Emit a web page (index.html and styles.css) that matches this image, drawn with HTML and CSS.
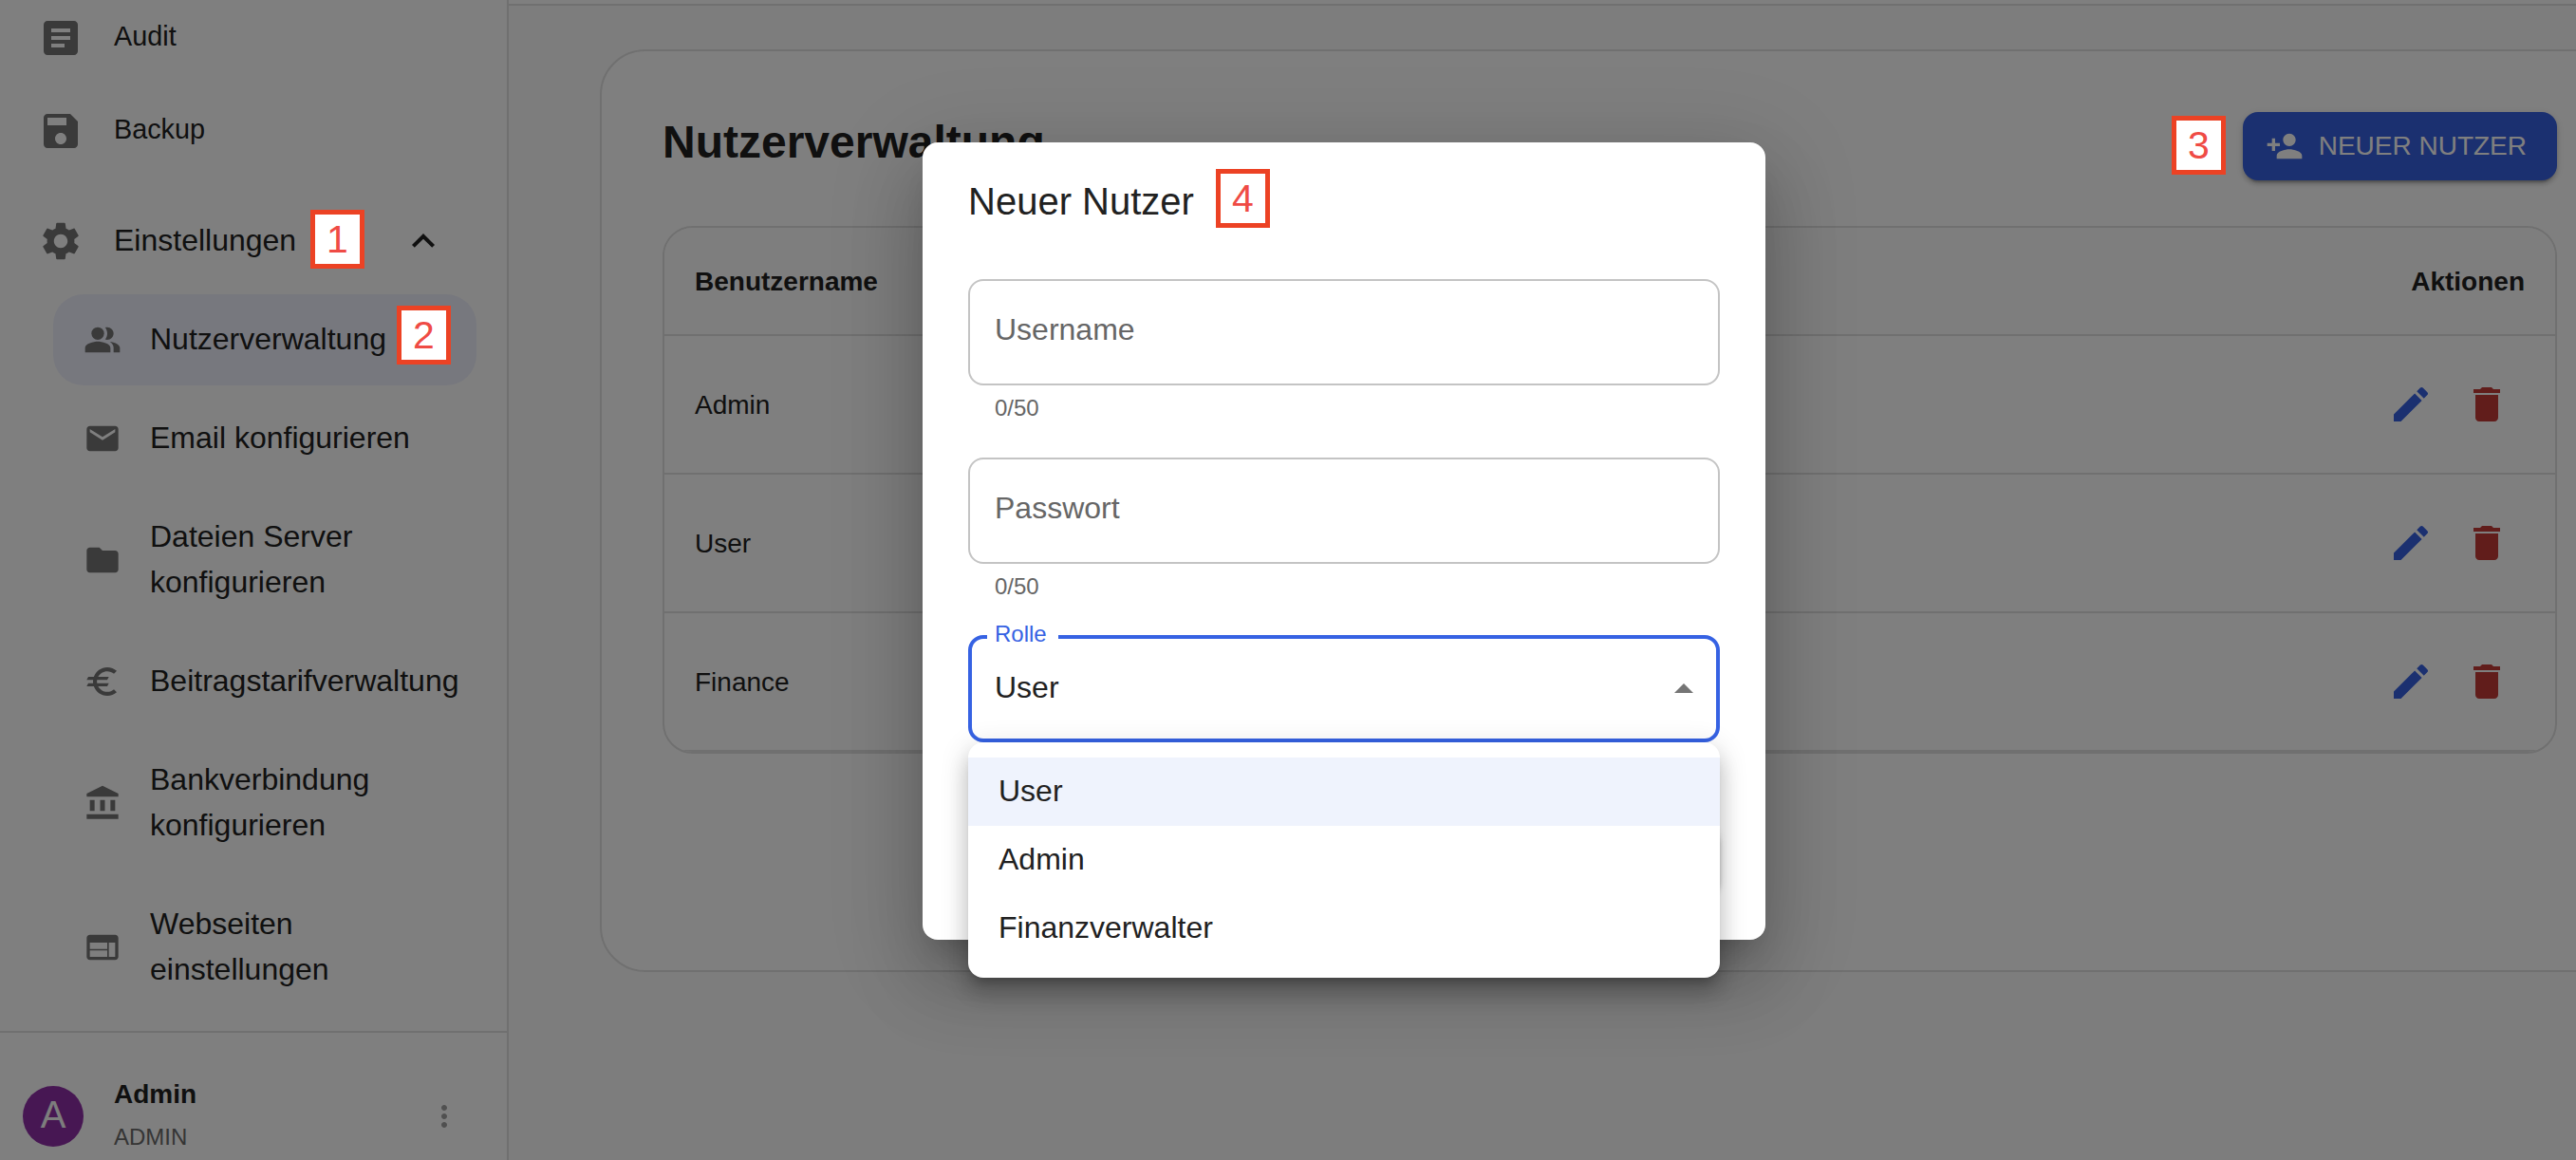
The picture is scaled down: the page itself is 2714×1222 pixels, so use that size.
FILE: index.html
```html
<!DOCTYPE html>
<html lang="de">
<head>
    <meta charset="UTF-8">
    <meta name="viewport" content="width=device-width, initial-scale=1.0">
    <title>Nutzerverwaltung</title>
    <link rel="stylesheet" href="styles.css">
</head>
<body>
    <!-- shared icons -->
    <svg class="sprite">
        <symbol id="icon-edit" viewBox="0 0 24 24"><path d="M3 17.25V21h3.75L17.81 9.94l-3.75-3.75L3 17.25zM20.71 7.04c.39-.39.39-1.02 0-1.41l-2.34-2.34c-.39-.39-1.02-.39-1.41 0l-1.83 1.83 3.75 3.75 1.83-1.83z"/></symbol>
        <symbol id="icon-delete" viewBox="0 0 24 24"><path d="M6 19c0 1.1.9 2 2 2h8c1.1 0 2-.9 2-2V7H6v12zM19 4h-3.5l-1-1h-5l-1 1H5v2h14V4z"/></symbol>
    </svg>

    <div class="app">
        <aside class="sidebar">
            <nav class="nav">
                <a class="nav-item">
                    <svg class="icon" viewBox="0 0 24 24"><path d="M19 3H5c-1.1 0-2 .9-2 2v14c0 1.1.9 2 2 2h14c1.1 0 2-.9 2-2V5c0-1.1-.9-2-2-2zm-5 14H7v-2h7v2zm3-4H7v-2h10v2zm0-4H7V7h10v2z"/></svg>
                    <span>Audit</span>
                </a>
                <a class="nav-item">
                    <svg class="icon" viewBox="0 0 24 24"><path d="M17 3H5c-1.11 0-2 .9-2 2v14c0 1.1.89 2 2 2h14c1.1 0 2-.9 2-2V7l-4-4zm-5 16c-1.66 0-3-1.34-3-3s1.34-3 3-3 3 1.34 3 3-1.34 3-3 3zm3-10H5V5h10v4z"/></svg>
                    <span>Backup</span>
                </a>
                <a class="nav-item nav-group">
                    <svg class="icon" viewBox="0 0 24 24"><path d="M19.14 12.94c.04-.3.06-.61.06-.94 0-.32-.02-.64-.07-.94l2.03-1.58c.18-.14.23-.41.12-.61l-1.92-3.32c-.12-.22-.37-.29-.59-.22l-2.39.96c-.5-.38-1.03-.7-1.62-.94l-.36-2.54c-.04-.24-.24-.41-.48-.41h-3.84c-.24 0-.43.17-.47.41l-.36 2.54c-.59.24-1.13.57-1.62.94l-2.39-.96c-.22-.08-.47 0-.59.22L2.74 8.87c-.12.21-.08.47.12.61l2.03 1.58c-.05.3-.09.63-.09.94s.02.64.07.94l-2.03 1.58c-.18.14-.23.41-.12.61l1.92 3.32c.12.22.37.29.59.22l2.39-.96c.5.38 1.03.7 1.62.94l.36 2.54c.05.24.24.41.48.41h3.84c.24 0 .44-.17.47-.41l.36-2.54c.59-.24 1.13-.56 1.62-.94l2.39.96c.22.08.47 0 .59-.22l1.92-3.32c.12-.22.07-.47-.12-.61l-2.01-1.58zM12 15.6c-1.98 0-3.6-1.62-3.6-3.6s1.62-3.6 3.6-3.6 3.6 1.62 3.6 3.6-1.62 3.6-3.6 3.6z"/></svg>
                    <span>Einstellungen</span>
                    <svg class="icon chevron" viewBox="0 0 24 24"><path d="m12 8-6 6 1.41 1.41L12 10.83l4.59 4.58L18 14z"/></svg>
                </a>
                <div class="sub-nav">
                    <a class="sub-item active">
                        <svg class="icon" viewBox="0 0 24 24"><path d="M16.67 13.13C18.04 14.06 19 15.32 19 17v3h4v-3c0-2.18-3.57-3.47-6.33-3.87z"/><circle cx="9" cy="8" r="4"/><path d="M15 12c2.21 0 4-1.79 4-4s-1.79-4-4-4c-.47 0-.91.1-1.33.24C14.5 5.27 15 6.58 15 8s-.5 2.73-1.33 3.76c.42.14.86.24 1.33.24zM9 13c-2.67 0-8 1.34-8 4v3h16v-3c0-2.66-5.33-4-8-4z"/></svg>
                        <span>Nutzerverwaltung</span>
                    </a>
                    <a class="sub-item">
                        <svg class="icon" viewBox="0 0 24 24"><path d="M20 4H4c-1.1 0-1.99.9-1.99 2L2 18c0 1.1.9 2 2 2h16c1.1 0 2-.9 2-2V6c0-1.1-.9-2-2-2zm0 4-8 5-8-5V6l8 5 8-5v2z"/></svg>
                        <span>Email konfigurieren</span>
                    </a>
                    <a class="sub-item">
                        <svg class="icon" viewBox="0 0 24 24"><path d="M10 4H4c-1.1 0-1.99.9-1.99 2L2 18c0 1.1.9 2 2 2h16c1.1 0 2-.9 2-2V8c0-1.1-.9-2-2-2h-8l-2-2z"/></svg>
                        <span>Dateien Server<br>konfigurieren</span>
                    </a>
                    <a class="sub-item">
                        <svg class="icon" viewBox="0 0 24 24"><path d="M15 18.5c-2.51 0-4.68-1.42-5.76-3.5H15l1-2H8.58c-.05-.33-.08-.66-.08-1s.03-.67.08-1H15l1-2H9.24C10.32 6.92 12.5 5.5 15 5.5c1.61 0 3.09.59 4.23 1.57L21 5.3C19.41 3.87 17.3 3 15 3c-3.92 0-7.24 2.51-8.48 6H3l-1 2h4.06c-.04.33-.06.66-.06 1s.02.67.06 1H3l-1 2h4.52c1.24 3.49 4.56 6 8.48 6 2.31 0 4.41-.87 6-2.3l-1.78-1.77c-1.13.98-2.6 1.57-4.22 1.57z"/></svg>
                        <span>Beitragstarifverwaltung</span>
                    </a>
                    <a class="sub-item">
                        <svg class="icon" viewBox="0 0 24 24"><path d="M4 10h3v7H4zM10.5 10h3v7h-3zM2 19h20v3H2zM17 10h3v7h-3zM12 1 2 6v2h20V6z"/></svg>
                        <span>Bankverbindung<br>konfigurieren</span>
                    </a>
                    <a class="sub-item">
                        <svg class="icon" viewBox="0 0 24 24"><path d="M20 4H4c-1.1 0-1.99.9-1.99 2L2 18c0 1.1.9 2 2 2h16c1.1 0 2-.9 2-2V6c0-1.1-.9-2-2-2zm-5 14H4v-4h11v4zm0-5H4V9h11v4zm5 5h-4V9h4v9z"/></svg>
                        <span>Webseiten<br>einstellungen</span>
                    </a>
                </div>
            </nav>
            <div class="account">
                <div class="avatar">A</div>
                <div class="account-info">
                    <div class="account-name">Admin</div>
                    <div class="account-role">ADMIN</div>
                </div>
                <svg class="icon more" viewBox="0 0 24 24"><path d="M12 8c1.1 0 2-.9 2-2s-.9-2-2-2-2 .9-2 2 .9 2 2 2zm0 2c-1.1 0-2 .9-2 2s.9 2 2 2 2-.9 2-2-.9-2-2-2zm0 6c-1.1 0-2 .9-2 2s.9 2 2 2 2-.9 2-2-.9-2-2-2z"/></svg>
            </div>
        </aside>

        <main class="main">
            <div class="topbar"></div>
            <section class="card">
                <div class="card-header">
                    <h1>Nutzerverwaltung</h1>
                    <button class="btn">
                        <svg class="icon" viewBox="0 0 24 24"><path d="M15 12c2.21 0 4-1.79 4-4s-1.79-4-4-4-4 1.79-4 4 1.79 4 4 4zm-9-2V7H4v3H1v2h3v3h2v-3h3v-2H6zm9 4c-2.67 0-8 1.34-8 4v2h16v-2c0-2.66-5.33-4-8-4z"/></svg>
                        <span>NEUER NUTZER</span>
                    </button>
                </div>
                <div class="table">
                    <div class="row head">
                        <span>Benutzername</span>
                        <span>Aktionen</span>
                    </div>
                    <div class="row">
                        <span>Admin</span>
                        <div class="actions">
                            <svg class="edit"><use href="#icon-edit"/></svg>
                            <svg class="delete"><use href="#icon-delete"/></svg>
                        </div>
                    </div>
                    <div class="row">
                        <span>User</span>
                        <div class="actions">
                            <svg class="edit"><use href="#icon-edit"/></svg>
                            <svg class="delete"><use href="#icon-delete"/></svg>
                        </div>
                    </div>
                    <div class="row">
                        <span>Finance</span>
                        <div class="actions">
                            <svg class="edit"><use href="#icon-edit"/></svg>
                            <svg class="delete"><use href="#icon-delete"/></svg>
                        </div>
                    </div>
                </div>
            </section>
        </main>
    </div>

    <div class="backdrop"></div>

    <div class="dialog">
        <h2>Neuer Nutzer</h2>
        <div class="field">Username</div>
        <div class="helper">0/50</div>
        <div class="field">Passwort</div>
        <div class="helper">0/50</div>
        <div class="field select">
            <label>Rolle</label>
            <span>User</span>
            <svg class="arrow" viewBox="0 0 24 24"><path d="m7 14 5-5 5 5z"/></svg>
            <div class="menu">
                <div class="option selected">User</div>
                <div class="option">Admin</div>
                <div class="option">Finanzverwalter</div>
            </div>
        </div>
        <div class="dialog-actions">
            <div class="submit"></div>
        </div>
    </div>

    <!-- numbered steps -->
    <div class="step step-1">1</div>
    <div class="step step-2">2</div>
    <div class="step step-3">3</div>
    <div class="step step-4">4</div>
</body>
</html>
```
FILE: styles.css
```css
* {
    box-sizing: border-box;
}

body {
    margin: 0;
    height: 1222px;
    overflow: hidden;
    position: relative;
    font-family: "Liberation Sans", Arial, sans-serif;
    font-size: 32px;
    color: #212121;
    background: #fafafa;
}

.sprite {
    display: none;
}

.icon {
    fill: #757575;
    flex-shrink: 0;
}

.app {
    display: flex;
    height: 1222px;
}

/* Sidebar */
.sidebar {
    width: 536px;
    flex-shrink: 0;
    display: flex;
    flex-direction: column;
    background: #fff;
    border-right: 2px solid #e0e0e0;
}

.nav {
    height: 1086px;
    flex-shrink: 0;
}

.nav-item {
    display: flex;
    align-items: center;
    gap: 32px;
    height: 80px;
    margin-bottom: 18px;
    padding: 0 64px 0 40px;
    font-size: 28.8px;
}

.nav-item .icon {
    width: 48px;
    height: 48px;
}

.nav-item span {
    padding-bottom: 3px;
}

.nav-group {
    height: 96px;
    margin: 28px 0 8px;
    font-size: 32px;
}

.nav-group span {
    padding-bottom: 1px;
}

.nav-group .chevron {
    margin-left: auto;
    fill: #212121;
}

.sub-nav {
    display: flex;
    flex-direction: column;
    gap: 8px;
    padding: 0 32px 0 56px;
}

.sub-item {
    display: flex;
    align-items: center;
    gap: 30px;
    padding: 24px 0 24px 32px;
    line-height: 48px;
    border-radius: 32px;
    white-space: nowrap;
}

.sub-item.active {
    background: #eff1fd;
}

.sub-item .icon {
    width: 40px;
    height: 40px;
}

.sub-item span {
    margin: -1px 0 1px;
}

.account {
    display: flex;
    align-items: flex-start;
    height: 150px;
    flex-shrink: 0;
    padding: 40px 48px 0 24px;
    border-top: 2px solid #e0e0e0;
}

.avatar {
    width: 64px;
    height: 64px;
    margin-top: 16px;
    border-radius: 50%;
    background: #8e2ea6;
    color: #fafafa;
    font-size: 40px;
    line-height: 61px;
    text-align: center;
}

.account-info {
    margin: 1px 0 0 32px;
}

.account-name {
    font-size: 28px;
    font-weight: bold;
    line-height: 48px;
}

.account-role {
    font-size: 24px;
    line-height: 42px;
    color: #6b6b6b;
}

.more {
    width: 36px;
    height: 36px;
    margin: 30px 0 0 auto;
    fill: #a0a0a0;
}

/* Content */
.main {
    flex: 1;
    min-width: 0;
}

.topbar {
    height: 6px;
    border-bottom: 2px solid #e0e0e0;
    background: #fff;
}

.card {
    width: 2128px;
    height: 972px;
    margin: 46px 0 0 96px;
    padding: 64px;
    border: 2px solid #e0e0e0;
    border-radius: 48px;
    background: #fff;
}

.card-header {
    display: flex;
    justify-content: space-between;
    align-items: flex-start;
    margin-bottom: 48px;
}

h1 {
    margin: 0;
    font-size: 48px;
    line-height: 64px;
}

.btn {
    display: flex;
    align-items: center;
    gap: 16px;
    height: 72px;
    padding: 0 32px 0 24px;
    border: none;
    border-radius: 16px;
    background: #3660e0;
    color: #fff;
    font-family: inherit;
    font-size: 28px;
    box-shadow: 0 6px 2px -4px rgba(0, 0, 0, .2), 0 4px 4px rgba(0, 0, 0, .14), 0 2px 10px rgba(0, 0, 0, .12);
}

.btn .icon {
    width: 40px;
    height: 40px;
    fill: #fff;
}

.table {
    border: 2px solid #e0e0e0;
    border-radius: 32px;
    overflow: hidden;
}

.row {
    display: flex;
    justify-content: space-between;
    align-items: center;
    height: 146px;
    padding: 0 32px;
    border-bottom: 2px solid #e0e0e0;
    font-size: 28px;
}

.row span {
    padding-top: 2px;
}

.row.head {
    height: 114px;
    font-weight: bold;
    background: #fcfcfc;
}

.actions {
    display: flex;
    gap: 32px;
    padding: 0 16px;
}

.actions svg {
    width: 48px;
    height: 48px;
}

.edit {
    fill: #3660e0;
}

.delete {
    fill: #c23b36;
}

.backdrop {
    position: absolute;
    inset: 0;
    background: rgba(0, 0, 0, .5);
}

/* Dialog */
.dialog {
    position: absolute;
    left: 972px;
    top: 150px;
    width: 888px;
    height: 840px;
    padding: 32px 48px 48px;
    display: flex;
    flex-direction: column;
    border-radius: 16px;
    background: #fff;
    box-shadow: 0 22px 30px -14px rgba(0, 0, 0, .2), 0 48px 76px 6px rgba(0, 0, 0, .14), 0 18px 92px 16px rgba(0, 0, 0, .12);
}

h2 {
    margin: 0 0 52px;
    font-size: 40px;
    font-weight: normal;
    line-height: 60px;
}

.field {
    height: 112px;
    flex-shrink: 0;
    padding: 0 26px;
    border: 2px solid #c4c4c4;
    border-radius: 16px;
    line-height: 102px;
    color: #666;
}

.helper {
    height: 76px;
    padding: 4px 28px 0;
    font-size: 24px;
    line-height: 40px;
    color: #666;
}

.select {
    position: relative;
    display: flex;
    justify-content: space-between;
    align-items: center;
    height: 113px;
    margin-top: -1px;
    padding: 0 10px 0 24px;
    border: 4px solid #3662e3;
    color: #212121;
}

.select span {
    line-height: 60px;
    padding-bottom: 4px;
}

/* sits on the outline and cuts the notch */
.select label {
    position: absolute;
    left: 16px;
    top: -19px;
    width: 75px;
    padding-left: 8px;
    background: #fff;
    color: #3662e3;
    font-size: 24px;
    line-height: 28px;
}

.arrow {
    width: 48px;
    height: 48px;
    fill: #757575;
}

.menu {
    position: absolute;
    left: -4px;
    top: 109px;
    width: 792px;
    padding: 16px 0;
    border-radius: 16px;
    background: #fff;
    z-index: 1;
    box-shadow: 0 10px 10px -6px rgba(0, 0, 0, .2), 0 16px 20px 2px rgba(0, 0, 0, .14), 0 6px 28px 4px rgba(0, 0, 0, .12);
}

.option {
    height: 72px;
    padding: 0 32px;
    line-height: 70px;
}

.option.selected {
    background: #eff3fd;
}

.dialog-actions {
    display: flex;
    justify-content: flex-end;
    margin-top: auto;
}

.submit {
    width: 200px;
    height: 72px;
    border-radius: 16px;
    background: #3660e0;
    box-shadow: 0 6px 2px -4px rgba(0, 0, 0, .2), 0 4px 4px rgba(0, 0, 0, .14), 0 2px 10px rgba(0, 0, 0, .12);
}

/* Step markers on top of everything */
.step {
    position: absolute;
    width: 57px;
    height: 62px;
    border: 5px solid #ec4224;
    background: #fff;
    color: #ef4b45;
    font-size: 41px;
    line-height: 53px;
    text-align: center;
}

.step-1 {
    left: 327px;
    top: 221px;
}

.step-2 {
    left: 418px;
    top: 322px;
}

.step-3 {
    left: 2288px;
    top: 122px;
}

.step-4 {
    left: 1281px;
    top: 178px;
}
```
